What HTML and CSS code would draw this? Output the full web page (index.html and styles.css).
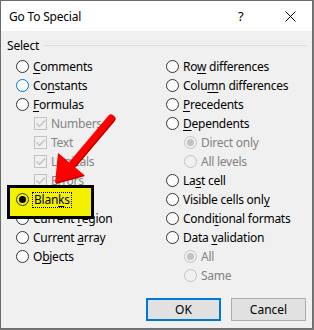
FILE: index.html
```html
<!DOCTYPE html>
<html lang="en">
<head>
  <meta charset="UTF-8">
  <title>Go To Special</title>
  <link rel="stylesheet" href="styles.css">
</head>
<body>

<div class="dialog">
  <div class="titlebar">
    <span class="title">Go To Special</span>
    <span class="help">?</span>
    <span class="close">
      <svg width="11" height="11" viewBox="0 0 11 11"><path d="M0.5 0.5 L10.5 10.5 M10.5 0.5 L0.5 10.5" stroke="#000" stroke-width="1"/></svg>
    </span>
  </div>

  <div class="content">
    <div class="legend"><span>Select</span><div class="rule"></div></div>

    <div class="cols">
      <div class="col">
        <div class="row"><span class="radio"></span><span class="label"><u>C</u>omments</span></div>
        <div class="row"><span class="radio hover"></span><span class="label">Co<u>n</u>stants</span></div>
        <div class="row"><span class="radio"></span><span class="label"><u>F</u>ormulas</span></div>
        <div class="row sub off"><span class="check"><svg width="11" height="11" viewBox="0 0 11 11"><path d="M1.5 5.5 L4.5 8.5 L10 2.5" fill="none" stroke="#bcbcbc" stroke-width="1.2"/></svg></span><span class="label">Numbers</span></div>
        <div class="row sub off"><span class="check"><svg width="11" height="11" viewBox="0 0 11 11"><path d="M1.5 5.5 L4.5 8.5 L10 2.5" fill="none" stroke="#bcbcbc" stroke-width="1.2"/></svg></span><span class="label">Text</span></div>
        <div class="row sub off"><span class="check"><svg width="11" height="11" viewBox="0 0 11 11"><path d="M1.5 5.5 L4.5 8.5 L10 2.5" fill="none" stroke="#bcbcbc" stroke-width="1.2"/></svg></span><span class="label">Logicals</span></div>
        <div class="row sub off"><span class="check"><svg width="11" height="11" viewBox="0 0 11 11"><path d="M1.5 5.5 L4.5 8.5 L10 2.5" fill="none" stroke="#bcbcbc" stroke-width="1.2"/></svg></span><span class="label">Errors</span></div>
        <div class="row highlight"><span class="radio on"></span><span class="label focus">Blan<u>k</u>s</span></div>
        <div class="row"><span class="radio"></span><span class="label">Current <u>r</u>egion</span></div>
        <div class="row"><span class="radio"></span><span class="label">Current <u>a</u>rray</span></div>
        <div class="row"><span class="radio"></span><span class="label">O<u>b</u>jects</span></div>
      </div>
      <div class="col">
        <div class="row"><span class="radio"></span><span class="label">Ro<u>w</u> differences</span></div>
        <div class="row"><span class="radio"></span><span class="label">Colu<u>m</u>n differences</span></div>
        <div class="row"><span class="radio"></span><span class="label"><u>P</u>recedents</span></div>
        <div class="row"><span class="radio"></span><span class="label"><u>D</u>ependents</span></div>
        <div class="row sub off"><span class="radio on"></span><span class="label">Direct only</span></div>
        <div class="row sub off"><span class="radio"></span><span class="label">All levels</span></div>
        <div class="row"><span class="radio"></span><span class="label">La<u>s</u>t cell</span></div>
        <div class="row"><span class="radio"></span><span class="label">Visible cells onl<u>y</u></span></div>
        <div class="row"><span class="radio"></span><span class="label">Condi<u>t</u>ional formats</span></div>
        <div class="row"><span class="radio"></span><span class="label">Data <u>v</u>alidation</span></div>
        <div class="row sub off"><span class="radio on"></span><span class="label">All</span></div>
        <div class="row sub off"><span class="radio"></span><span class="label">Same</span></div>
      </div>
    </div>

    <div class="buttons">
      <button class="btn default">OK</button>
      <button class="btn">Cancel</button>
    </div>
  </div>

  <svg class="arrow" width="314" height="330" viewBox="0 0 314 330">
    <line x1="112" y1="119" x2="74" y2="164" stroke="#b00000" stroke-width="7" stroke-linecap="round"/>
    <line x1="111" y1="118" x2="73" y2="163" stroke="#ff0000" stroke-width="7" stroke-linecap="round"/>
    <polygon points="56,184 59,154 85,176" fill="#b00000"/>
    <polygon points="55,183 58,153 84,175" fill="#ff0000"/>
  </svg>
</div>

</body>
</html>
```

FILE: styles.css
```css
* {
  box-sizing: border-box;
}

body {
  margin: 0;
  background: #7a7a7a;
  font-family: 'Noto Sans', sans-serif;
  font-size: 12px;
  color: #000;
}

.dialog {
  position: relative;
  width: 313px;
  height: 329px;
  background: #f0f0f0;
  border: 1px solid #6b6b6b;
  display: flex;
  flex-direction: column;
}

.titlebar {
  height: 30px;
  background: #fff;
  display: flex;
  align-items: center;
  padding-left: 8px;
}

.title {
  flex: 1;
  font-size: 12px;
  letter-spacing: -0.2px;
}

.help {
  width: 14px;
  margin-right: 33px;
  font-size: 13px;
}

.close {
  width: 11px;
  margin-right: 16px;
  display: flex;
}

.content {
  flex: 1;
  display: flex;
  flex-direction: column;
  padding: 6px 6px 0 6px;
}

.legend {
  display: flex;
  align-items: center;
  gap: 5px;
  height: 16px;
  letter-spacing: -0.2px;
}

.rule {
  flex: 1;
  height: 1px;
  background: #dcdcdc;
}

.cols {
  display: grid;
  grid-template-columns: 150px 1fr;
  padding-left: 9px;
  margin-top: 4px;
}

.row {
  height: 19px;
  display: flex;
  align-items: center;
  gap: 4px;
  white-space: nowrap;
}

.label {
  letter-spacing: -0.25px;
}

.label u {
  text-decoration-thickness: 1px;
  text-underline-offset: 2px;
}

.sub {
  padding-left: 18px;
}

.off {
  color: #838383;
}

.radio {
  width: 13px;
  height: 13px;
  border: 1px solid #333;
  border-radius: 50%;
  background: #fff;
  display: flex;
  align-items: center;
  justify-content: center;
  flex: none;
}

.radio.hover {
  border-color: #0078d7;
}

.radio.on::after {
  content: "";
  width: 7px;
  height: 7px;
  border-radius: 50%;
  background: #000;
}

.off .radio {
  border-color: #c2c2c2;
  background: #f0f0f0;
}

.off .radio.on::after {
  background: #c2c2c2;
}

.check {
  width: 13px;
  height: 13px;
  border: 1px solid #c2c2c2;
  display: flex;
  align-items: center;
  justify-content: center;
  flex: none;
}

.highlight {
  position: relative;
}

.highlight::before {
  content: "";
  position: absolute;
  left: -9px;
  top: -5px;
  width: 81px;
  height: 28px;
  background: #f3f000;
  border: 3px solid #000;
}

.highlight .radio,
.highlight .focus {
  position: relative;
}

.highlight .radio {
  background: #f3f000;
}

.focus {
  outline: 1px dotted #000;
  outline-offset: 0;
  padding: 0 1px;
  line-height: 14px;
}

.buttons {
  margin-top: auto;
  margin-bottom: 7px;
  display: flex;
  justify-content: flex-end;
  gap: 10px;
}

.btn {
  width: 75px;
  height: 23px;
  font-family: 'Noto Sans', sans-serif;
  font-size: 12px;
  background: #e1e1e1;
  border: 1px solid #adadad;
  color: #000;
  padding: 0;
}

.btn.default {
  border: 2px solid #0078d7;
}

.arrow {
  position: absolute;
  left: -1px;
  top: -1px;
  pointer-events: none;
}
```
